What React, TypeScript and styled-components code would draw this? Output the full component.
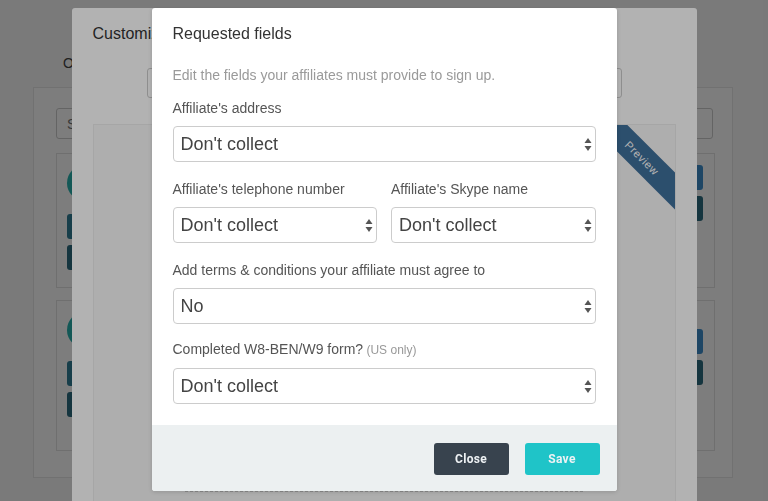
import styled, { createGlobalStyle } from 'styled-components';

const GlobalStyle = createGlobalStyle`
  html, body { margin: 0; padding: 0; }
  body {
    font-family: "Liberation Sans", Arial, sans-serif;
    background: #f8f8f8;
    overflow: hidden;
  }
  * { box-sizing: border-box; }
`;

type Field = { label: string; note?: string; value: string; options: string[] };

const collectOptions = ["Don't collect", 'Optional', 'Required'];

const Arrows = () => (
  <ArrowIcon width="8" height="15" viewBox="0 0 8 15">
    <path d="M0.5 6 L4 1 L7.5 6 Z" fill="#555" />
    <path d="M0.5 9 L4 14 L7.5 9 Z" fill="#555" />
  </ArrowIcon>
);

const SelectField = ({ field, tight }: { field: Field; tight?: boolean }) => (
  <FieldGroup $tight={tight}>
    <Label>
      {field.label}
      {field.note && <Note> {field.note}</Note>}
    </Label>
    <SelectWrap>
      <Select defaultValue={field.value}>
        {field.options.map((o) => (
          <option key={o}>{o}</option>
        ))}
      </Select>
      <Arrows />
    </SelectWrap>
  </FieldGroup>
);

const PageCard = ({ tall }: { tall?: boolean }) => (
  <Card $tall={tall}>
    <CardCol>
      <Avatar />
      <PageButton $color="#2f7f97" />
      <PageButton $color="#2c6c80" />
    </CardCol>
    <CardCol $offset={tall ? 17 : 0}>
      <PageButton $color="#3d8fcf" />
      <PageButton $color="#2c6c80" />
    </CardCol>
  </Card>
);

const App = () => {
  return (
    <>
      <GlobalStyle />
      <Page>
        <Tabs>
          <Tab>Overview</Tab>
          <Tab>Affiliates</Tab>
          <Tab>Settings</Tab>
        </Tabs>
        <Panel>
          <Search placeholder="Search programs" />
          <PageCard />
          <PageCard tall />
        </Panel>
      </Page>

      <Overlay>
        <BackModal>
          <BackTitle>Customize your sign-up page</BackTitle>
          <BackInput defaultValue="" />
          <PreviewBox>
            <Ribbon>Preview</Ribbon>
            <Dashed />
          </PreviewBox>
        </BackModal>
      </Overlay>

      <Overlay>
        <Modal>
          <ModalBody>
            <Title>Requested fields</Title>
            <Subtitle>Edit the fields your affiliates must provide to sign up.</Subtitle>
            <Fields>
              <SelectField field={{ label: "Affiliate's address", value: "Don't collect", options: collectOptions }} />
              <TwoCols>
                <SelectField field={{ label: "Affiliate's telephone number", value: "Don't collect", options: collectOptions }} />
                <SelectField field={{ label: "Affiliate's Skype name", value: "Don't collect", options: collectOptions }} />
              </TwoCols>
              <SelectField field={{ label: 'Add terms & conditions your affiliate must agree to', value: 'No', options: ['No', 'Yes'] }} />
              <SelectField
                tight
                field={{ label: 'Completed W8-BEN/W9 form?', note: '(US only)', value: "Don't collect", options: collectOptions }}
              />
            </Fields>
          </ModalBody>
          <Footer>
            <Button $bg="#38434e">Close</Button>
            <Button $bg="#1fc4c8">Save</Button>
          </Footer>
        </Modal>
      </Overlay>
    </>
  );
};

/* page behind both modals */
const Page = styled.div`
  height: 501px;
  padding: 54px 35px 0 33px;
`;

const Tabs = styled.div`
  display: flex;
  gap: 30px;
  padding-left: 30px;
  height: 33px;
`;

const Tab = styled.div`
  font-size: 14px;
  line-height: 18px;
  color: #444;
`;

const Panel = styled.div`
  height: 391px;
  background: #fff;
  border: 1px solid #e6e6e6;
  padding: 20px 19px 0 22px;
  display: flex;
  flex-direction: column;
  gap: 12px;
`;

const Search = styled.input`
  height: 31px;
  border: 1px solid #ccc;
  border-radius: 3px;
  padding: 0 10px;
  font-size: 14px;
  font-family: inherit;
  margin-bottom: 2px;
`;

const Card = styled.div<{ $tall?: boolean }>`
  display: flex;
  justify-content: space-between;
  border: 1px solid #e2e2e2;
  padding: 11px 11px ${(p) => (p.$tall ? 33 : 17)}px 10px;
  margin-right: -2px;
`;

const CardCol = styled.div<{ $offset?: number }>`
  display: flex;
  flex-direction: column;
  gap: 6px;
  padding-top: ${(p) => p.$offset ?? 0}px;
`;

const Avatar = styled.div`
  width: 36px;
  height: 36px;
  border-radius: 50%;
  background: #27b3b0;
  margin-bottom: 7px;
`;

const PageButton = styled.div<{ $color: string }>`
  width: 56px;
  height: 25px;
  border-radius: 3px;
  background: ${(p) => p.$color};
`;

/* overlays */
const Overlay = styled.div`
  position: fixed;
  inset: 0;
  background: rgba(0, 0, 0, 0.3);
  display: flex;
  justify-content: center;
  align-items: flex-start;
  padding-top: 8px;
`;

const BackModal = styled.div`
  width: 625px;
  height: 520px;
  background: #fff;
  border-radius: 3px;
  padding: 16px 21px 0;
  display: flex;
  flex-direction: column;
`;

const BackTitle = styled.div`
  font-size: 16px;
  line-height: 20px;
  color: #333;
`;

const BackInput = styled.input`
  align-self: center;
  width: 475px;
  height: 30px;
  margin-top: 24px;
  border: 1px solid #ccc;
  border-radius: 3px;
`;

const PreviewBox = styled.div`
  position: relative;
  overflow: hidden;
  margin-top: 26px;
  height: 380px;
  background: #f9f9f9;
  border: 1px solid #eee;
  display: flex;
  flex-direction: column;
  justify-content: flex-end;
  align-items: center;
`;

const Ribbon = styled.div`
  position: absolute;
  top: 20px;
  right: -67px;
  width: 200px;
  height: 26px;
  line-height: 26px;
  text-align: center;
  background: #40719d;
  color: #fff;
  font-size: 11px;
  letter-spacing: 0.5px;
  transform: rotate(45deg);
`;

const Dashed = styled.div`
  width: 398px;
  border-top: 1px dashed #c8c8c8;
  margin-bottom: 11px;
`;

/* front modal */
const Modal = styled.div`
  width: 465px;
  background: #fff;
  border-radius: 3px;
  overflow: hidden;
  box-shadow: 0 1px 4px rgba(0, 0, 0, 0.15);
`;

const ModalBody = styled.div`
  padding: 16px 21px 21px;
  display: flex;
  flex-direction: column;
`;

const Title = styled.div`
  font-size: 16px;
  line-height: 20px;
  color: #333;
`;

const Subtitle = styled.div`
  font-size: 14px;
  line-height: 20px;
  color: #9a9a9a;
  margin-top: 21px;
`;

const Fields = styled.div`
  display: flex;
  flex-direction: column;
  gap: 17px;
  margin-top: 13px;
`;

const FieldGroup = styled.div<{ $tight?: boolean }>`
  display: flex;
  flex-direction: column;
  gap: 8px;
  min-width: 0;
  margin-top: ${(p) => (p.$tight ? -2 : 0)}px;
`;

const Label = styled.div`
  font-size: 14px;
  line-height: 20px;
  color: #555;
  white-space: nowrap;
`;

const Note = styled.span`
  font-size: 12px;
  color: #999;
`;

const TwoCols = styled.div`
  display: grid;
  grid-template-columns: 1fr 1fr;
  gap: 14px;
`;

const SelectWrap = styled.div`
  position: relative;
`;

const Select = styled.select`
  appearance: none;
  width: 100%;
  height: 36px;
  padding: 0 24px 0 7px;
  border: 1px solid #ccc;
  border-radius: 4px;
  background: #fff;
  font-family: "Liberation Sans", Arial, sans-serif;
  font-size: 18px;
  color: #444;
  outline: none;
`;

const ArrowIcon = styled.svg`
  position: absolute;
  right: 4px;
  top: 11px;
  pointer-events: none;
`;

const Footer = styled.div`
  height: 66px;
  background: #ecf0f1;
  display: flex;
  justify-content: flex-end;
  align-items: center;
  gap: 16px;
  padding: 2px 17px 0 0;
`;

const Button = styled.button<{ $bg: string }>`
  width: 75px;
  height: 32px;
  border: none;
  border-radius: 3px;
  background: ${(p) => p.$bg};
  color: #eef2f4;
  font-family: Roboto, "Liberation Sans", sans-serif;
  font-weight: 700;
  font-size: 12px;
  letter-spacing: 0.3px;
`;

export default App;
